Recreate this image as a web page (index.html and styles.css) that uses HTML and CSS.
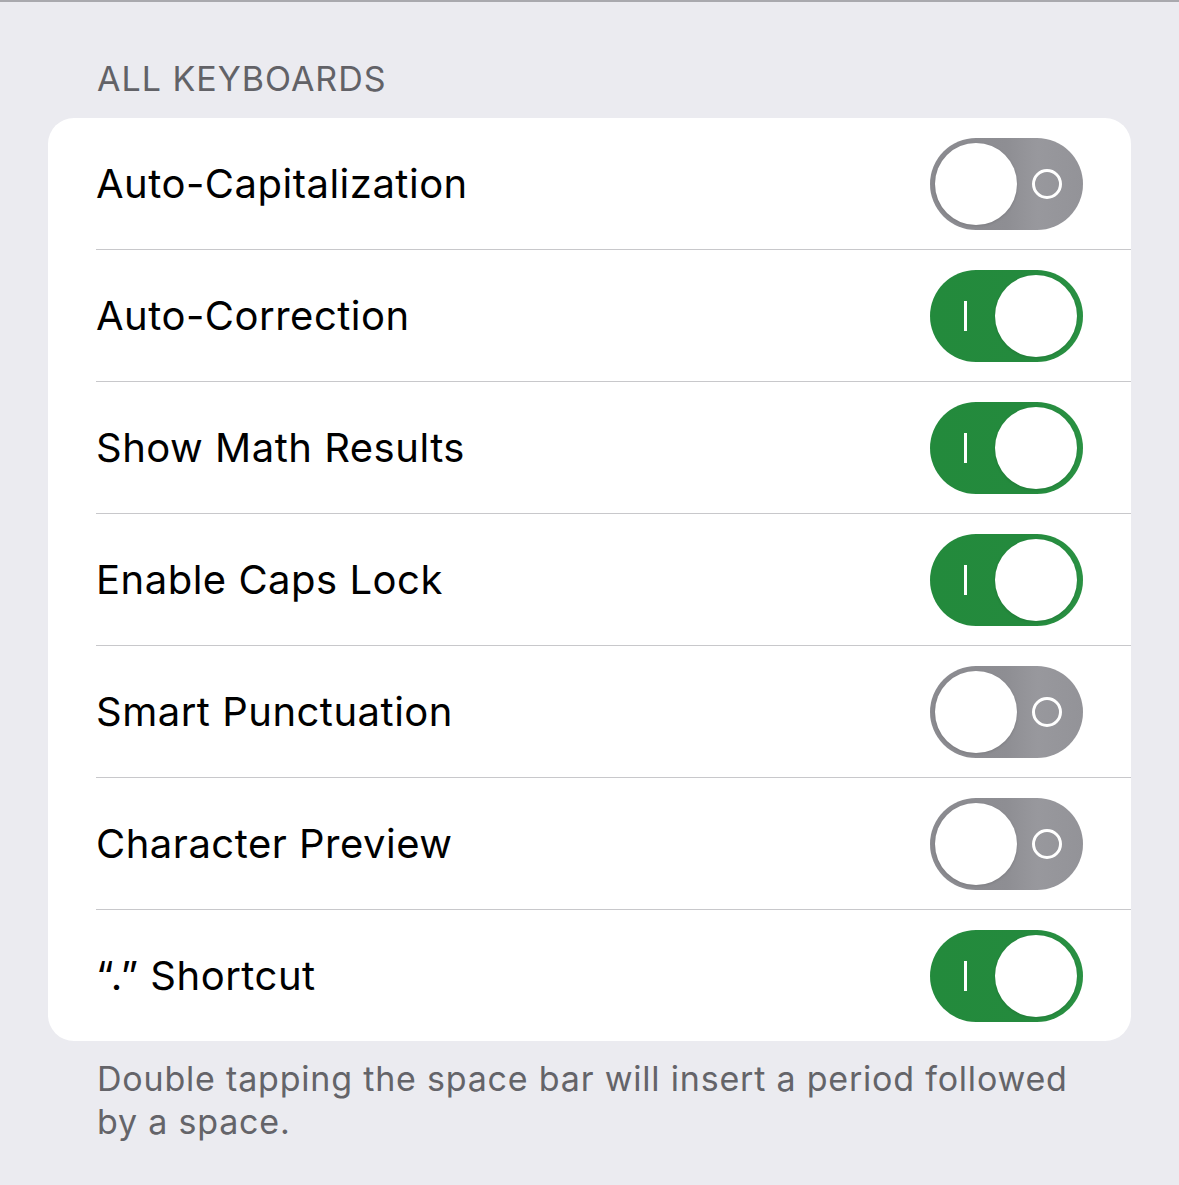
FILE: index.html
```html
<!DOCTYPE html>
<html lang="en">
	<head>
		<title>Keyboards</title>
		<link rel="stylesheet" href="styles.css">
	</head>
	<body>
		<div id="main">
			<div class="section-title">ALL KEYBOARDS</div>
			<div class="card">
				<div class="row"><span class="label">Auto-Capitalization</span><span class="switch off"><span class="knob"></span><span class="ring"></span></span></div>
				<div class="row"><span class="label">Auto-Correction</span><span class="switch on"><span class="bar"></span><span class="knob"></span></span></div>
				<div class="row"><span class="label">Show Math Results</span><span class="switch on"><span class="bar"></span><span class="knob"></span></span></div>
				<div class="row"><span class="label">Enable Caps Lock</span><span class="switch on"><span class="bar"></span><span class="knob"></span></span></div>
				<div class="row"><span class="label">Smart Punctuation</span><span class="switch off"><span class="knob"></span><span class="ring"></span></span></div>
				<div class="row"><span class="label">Character Preview</span><span class="switch off"><span class="knob"></span><span class="ring"></span></span></div>
				<div class="row last"><span class="label">&ldquo;.&rdquo; Shortcut</span><span class="switch on"><span class="bar"></span><span class="knob"></span></span></div>
			</div>
			<div class="footnote">Double tapping the space bar will insert a period followed by a space.</div>
		</div>
	</body>
</html>
```

FILE: styles.css
```css
body, html {margin:0;padding:0;background:#ebebf0;font-family:Inter,"Noto Sans",sans-serif;}
body {border-top:2px solid #a9a9ae;min-height:1183px;}
#main {padding:0 48px;}
.section-title {margin:57px 0 0 49px;font-size:34px;line-height:40px;color:#626267;letter-spacing:1px;}
.card {margin-top:19px;background:#fff;border-radius:26px;overflow:hidden;}
.row {display:flex;align-items:center;justify-content:space-between;height:131px;margin-left:48px;padding-right:48px;border-bottom:1px solid #c8c8cb;}
.row.last {border-bottom:none;height:131px;}
.label {font-size:40px;color:#000;letter-spacing:0.5px;}
.switch {display:flex;align-items:center;width:153px;height:92px;border-radius:46px;box-sizing:border-box;}
.switch.off {padding-left:5px;background:linear-gradient(90deg,#8a8a8f 0%,#8e8e93 50%,#98989d 70%,#939398 100%);}
.switch.on {padding:0 6px 0 34px;background:linear-gradient(90deg,#238a3c 0%,#248a3d 60%,#2a9143 100%);}
.knob {width:82px;height:82px;border-radius:50%;background:#fff;box-shadow:0 1px 3px rgba(0,0,0,0.12);}
.switch.on .knob {margin-left:auto;}
.ring {width:24px;height:24px;margin-left:15px;border:3px solid #fff;border-radius:50%;}
.bar {width:3px;height:30px;background:#fff;}
.footnote {margin:16px 40px 0 49px;font-size:34px;line-height:43px;color:#646469;letter-spacing:0.8px;}
```
